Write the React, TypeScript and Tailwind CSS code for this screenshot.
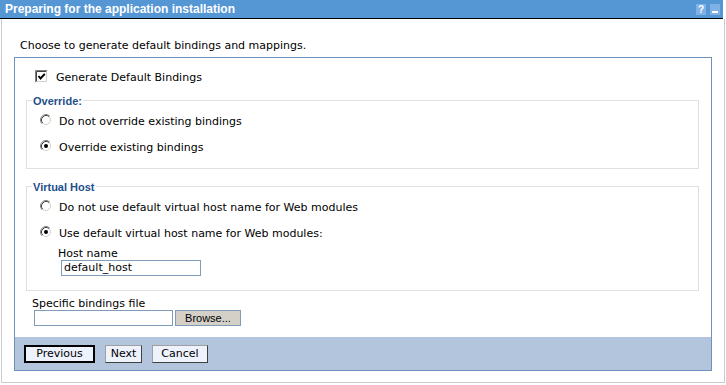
import React from "react";

const Radio = ({ checked }: { checked?: boolean }) => (
  <svg width="12" height="12" viewBox="0 0 12 12" className="block shrink-0">
    <circle cx="6" cy="6" r="5.5" fill="#ffffff" />
    <path d="M2.11 9.89 A5.5 5.5 0 0 1 9.89 2.11" stroke="#808080" fill="none" />
    <path d="M9.89 2.11 A5.5 5.5 0 0 1 2.11 9.89" stroke="#ffffff" fill="none" />
    <path d="M2.82 9.18 A4.5 4.5 0 0 1 9.18 2.82" stroke="#404040" fill="none" />
    <path d="M9.18 2.82 A4.5 4.5 0 0 1 2.82 9.18" stroke="#d4d0c8" fill="none" />
    {checked && <circle cx="6" cy="6" r="2" fill="#000000" />}
  </svg>
);

const Checkbox = () => (
  <svg width="13" height="13" viewBox="0 0 13 13" className="block shrink-0">
    <rect x="0" y="0" width="13" height="13" fill="#ffffff" />
    <path d="M0.5 12.5 V0.5 H12.5" stroke="#808080" fill="none" />
    <path d="M1.5 11.5 V1.5 H11.5" stroke="#404040" fill="none" />
    <path d="M0.5 12.5 H12.5 V0.5" stroke="#ffffff" fill="none" />
    <path d="M1.5 11.5 H11.5 V1.5" stroke="#d4d0c8" fill="none" />
    <path d="M3.5 6 L5.5 8.5 L9.8 3.8" stroke="#000000" strokeWidth="1.9" fill="none" />
  </svg>
);

const RadioRow = ({ checked, label, className }: { checked?: boolean; label: string; className?: string }) => (
  <div className={"flex items-start ml-[13px] " + (className ?? "")}>
    <Radio checked={checked} />
    <span className="ml-[7px] mt-[1px] leading-[13px] whitespace-nowrap">{label}</span>
  </div>
);

const Legend = ({ children }: { children: React.ReactNode }) => (
  <div className="-mt-[6px] ml-[5px] w-fit bg-white px-[1px] font-['Liberation_Sans',Arial,sans-serif] text-[11px] font-bold leading-[13px] text-[#1f4f8b]">
    {children}
  </div>
);

export default function App() {
  return (
    <div className="w-[726px] h-[385px] bg-white text-black font-['DejaVu_Sans',Verdana,sans-serif] text-[11px]">
      <div className="w-[723px] h-[19px] bg-[#5596d5] border-b border-black flex items-center justify-between pl-[5px] pr-[3px]">
        <span className="font-['Liberation_Sans',Arial,sans-serif] font-bold text-[12px] text-white leading-[14px]">
          Preparing for the application installation
        </span>
        <div className="flex items-center gap-[4px] mt-[1px]">
          <span className="w-[10px] h-[11px] bg-[#7fb1e6] text-white font-['Liberation_Sans',Arial,sans-serif] font-bold text-[10px] leading-[11px] flex justify-center">
            ?
          </span>
          <span className="w-[10px] h-[11px] bg-[#7fb1e6] flex items-end justify-center pb-[2px]">
            <span className="block w-[6px] h-[2px] bg-white" />
          </span>
        </div>
      </div>
      <div className="ml-[1px] w-[724px] h-[364px] border-l border-r border-b border-[#cccccc] flex flex-col">
        <div className="ml-[18px] mt-[20px] leading-[13px]">Choose to generate default bindings and mappings.</div>
        <div className="ml-[12px] mt-[5px] w-[698px] h-[314px] border border-[#6f8fbf] flex flex-col">
          <div className="flex items-start ml-[20px] mt-[12px]">
            <Checkbox />
            <span className="ml-[8px] mt-[1px] leading-[13px]">Generate Default Bindings</span>
          </div>

          <div className="ml-[11px] mt-[16px] w-[673px] h-[69px] border border-[#e0e0e0]">
            <Legend>Override:</Legend>
            <RadioRow className="mt-[6px]" label="Do not override existing bindings" />
            <RadioRow className="mt-[12px]" checked label="Override existing bindings" />
          </div>

          <div className="ml-[11px] mt-[17px] w-[673px] h-[105px] border border-[#e0e0e0]">
            <Legend>Virtual Host</Legend>
            <RadioRow className="mt-[6px]" label="Do not use default virtual host name for Web modules" />
            <RadioRow className="mt-[12px]" checked label="Use default virtual host name for Web modules:" />
            <div className="ml-[31px] mt-[8px] leading-[12px]">Host name</div>
            <div className="ml-[34px] w-[140px] h-[16px] border border-[#7f9db9] pl-[2px] leading-[14px] whitespace-nowrap">
              default_host
            </div>
          </div>

          <div className="ml-[17px] mt-[7px] leading-[12px]">Specific bindings file</div>
          <div className="flex ml-[19px]">
            <div className="w-[139px] h-[16px] border border-[#7f9db9] bg-white" />
            <div className="ml-[2px] w-[66px] h-[16px] border border-[#7f9db9] bg-[#d4d0c8] font-['Liberation_Sans',Arial,sans-serif] text-[11px] leading-[14px] text-center">
              Browse...
            </div>
          </div>

          <div className="mt-auto h-[33px] bg-[#b3c5dd] flex items-start pt-[8px] pl-[9px] gap-[10px]">
            <div className="w-[71px] h-[18px] border-2 border-black bg-[#eef2fd] leading-[14px] text-center">Previous</div>
            <div className="w-[37px] h-[18px] border border-[#a0a0a0] border-r-[#404040] border-b-[#404040] bg-[#eef2fd] leading-[16px] text-center">
              Next
            </div>
            <div className="w-[56px] h-[18px] border border-[#a0a0a0] border-r-[#404040] border-b-[#404040] bg-[#eef2fd] leading-[16px] text-center">
              Cancel
            </div>
          </div>
        </div>
      </div>
    </div>
  );
}
